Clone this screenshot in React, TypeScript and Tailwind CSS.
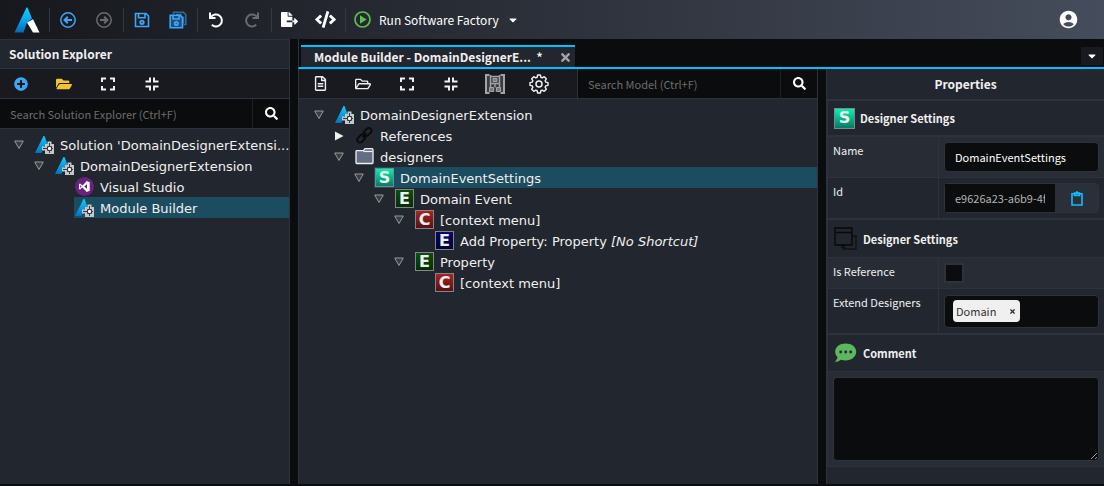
import React from "react";
import {
  FaCaretDown,
  FaCode,
  FaFileExport,
  FaFolderOpen,
  FaPlusCircle,
  FaRegFileAlt,
  FaRegFolderOpen,
  FaSearch,
  FaTimes,
} from "react-icons/fa";
import { MdAccountCircle } from "react-icons/md";

function Logo() {
  return (
    <svg width="26" height="26" viewBox="0 0 26 26" aria-hidden="true">
      <defs>
        <linearGradient id="logo-blue" x1="0" y1="0" x2="0" y2="1">
          <stop offset="0" stopColor="#12d0ff" />
          <stop offset="0.5" stopColor="#0aa5ec" />
          <stop offset="1" stopColor="#0568b4" />
        </linearGradient>
      </defs>
      <path d="M12.500 0.500h1L18 11.500l-5 4-3.500 10H0.500z" fill="url(#logo-blue)" />
      <path d="M13 15.500l6-3.300 6.500 13.300h-6.500z" fill="#fff" />
    </svg>
  );
}

function ArrowCircle({ flip }: { flip?: boolean }) {
  return (
    <svg width="16" height="16" viewBox="0 0 16 16" fill="none" stroke="currentColor" strokeWidth="1.500" aria-hidden="true">
      <circle cx="8" cy="8" r="7.200" />
      <path d={flip ? "M4 8h7M8.200 4.800L11.400 8l-3.200 3.200" : "M12 8H5M7.800 4.800L4.600 8l3.200 3.200"} strokeWidth="2" />
    </svg>
  );
}

function SaveIcon() {
  return (
    <svg width="16" height="16" viewBox="0 0 16 16" fill="none" stroke="currentColor" strokeWidth="1.600" aria-hidden="true">
      <path d="M1.500 1.500h10.500l2.500 2.500v10.500H1.500z" />
      <path d="M4.500 2v3.700h6.500V2" />
      <circle cx="8" cy="10.300" r="1.700" strokeWidth="1.900" />
    </svg>
  );
}

function SaveAllIcon() {
  return (
    <svg width="18" height="18" viewBox="0 0 18 18" fill="none" stroke="currentColor" strokeWidth="1.600" aria-hidden="true">
      <g opacity="0.550">
        <path d="M4.500 3.500V1.200h9.800l2.500 2.500v9.800H14.500" />
        <path d="M7 3.500h6M14.500 5.500v7" />
      </g>
      <path d="M1.200 4.200h9.800l2.500 2.500v10H1.200z" fill="#1d4f80" />
      <path d="M4 4.700v3.300h6V4.700" />
      <circle cx="7.300" cy="12.500" r="1.600" strokeWidth="1.900" />
    </svg>
  );
}

function TurnIcon({ flip }: { flip?: boolean }) {
  return (
    <svg width="16" height="16" viewBox="0 0 16 16" fill="none" stroke="currentColor" strokeWidth="2" aria-hidden="true">
      <g transform={flip ? "translate(16 0) scale(-1 1)" : undefined}>
        <path d="M3 4.900A6 6 0 1 1 3.800 12.800" />
        <path d="M2 0.500v5.500h5.500" />
      </g>
    </svg>
  );
}

function PlayIcon() {
  return (
    <svg width="17" height="17" viewBox="0 0 17 17" fill="none" aria-hidden="true">
      <circle cx="8.500" cy="8.500" r="7.500" stroke="#5cc04c" strokeWidth="1.700" />
      <path d="M6 4.300l6.700 4.200L6 12.700z" fill="#5cc04c" />
    </svg>
  );
}

function ExpandIcon() {
  return (
    <svg width="14" height="14" viewBox="0 0 14 14" fill="none" stroke="currentColor" strokeWidth="2" aria-hidden="true">
      <path d="M1 5V1.500h4M9 1.500h4V5M13 9v3.500H9M5 12.500H1V9" />
    </svg>
  );
}

function CollapseIcon() {
  return (
    <svg width="14" height="14" viewBox="0 0 14 14" fill="none" stroke="currentColor" strokeWidth="2" aria-hidden="true">
      <path d="M5 0.500v4H0.500M9 0.500v4h4.500M13.500 9.500H9v4M0.500 9.500H5v4" />
    </svg>
  );
}

function FrameIcon() {
  return (
    <svg width="20" height="20" viewBox="0 0 20 20" fill="none" stroke="currentColor" aria-hidden="true">
      <path d="M4.500 1H1v18h3.500M15.500 1H19v18h-3.500" strokeWidth="2" />
      <path d="M2 2h16v16H2z" fill="currentColor" fillOpacity="0.250" stroke="none" />
      <path d="M5.500 1v13M14.500 1v13M5.500 2.500h9M5.500 9.500h9M10 9.500v4" strokeWidth="1.400" />
      <path d="M8 4.500h4v3H8zM4.500 13.500h4v4h-4zM11.500 13.500h4v4h-4z" fill="currentColor" fillOpacity="0.600" />
    </svg>
  );
}

function GearIcon() {
  return (
    <svg width="20" height="20" viewBox="0 0 20 20" fill="none" stroke="currentColor" strokeLinejoin="round" aria-hidden="true">
      <path
        d="M8.500 1h3l.6 2.500 1.500.7 2.200-1.300 2.300 2.300-1.300 2.200.7 1.500 2.500.6v3l-2.500.6-.7 1.500 1.300 2.200-2.300 2.300-2.200-1.300-1.500.7-.6 2.500h-3l-.6-2.500-1.500-.7-2.200 1.300-2.300-2.300 1.300-2.200-.7-1.500L0 12.500v-3l2.500-.6.7-1.500-1.300-2.200 2.300-2.300 2.200 1.300 1.500-.7z"
        transform="translate(1 .1) scale(.9)"
        strokeWidth="1.600"
      />
      <circle cx="10" cy="10" r="3" strokeWidth="1.500" />
    </svg>
  );
}

function ModuleIcon() {
  return (
    <svg width="19" height="19" viewBox="0 0 19 19" fill="none" aria-hidden="true">
      <defs>
        <linearGradient id="module-blue" x1="0" y1="0" x2="0" y2="1">
          <stop offset="0" stopColor="#12ccff" />
          <stop offset="1" stopColor="#0571c0" />
        </linearGradient>
      </defs>
      <path d="M8.500 1h1l3 8-4 3-2 6H0z" fill="url(#module-blue)" />
      <path d="M10 9h2.500V6.500h4V9H19v10h-9v-3.500H7v-4h3z" fill="#c4c6ca" />
      <path d="M8 13.500h10M14.500 8v10" stroke="#33373f" />
      <path d="M12.500 11.500h4v4h-4z" stroke="#33373f" />
      <path d="M14.500 12v3M13 13.500h3" stroke="#fff" />
    </svg>
  );
}

function StudioIcon() {
  return (
    <svg width="19" height="19" viewBox="0 0 19 19" aria-hidden="true">
      <circle cx="9.500" cy="9.500" r="9.400" fill="#6a2180" />
      <path
        d="M4 7l1-.5 2.500 2L11.700 4l3 1.200v8.600l-3 1.200-4.200-4.500-2.500 2L4 12zM5.200 8v3l1.400-1.500zM12 7.200L9.200 9.500l2.800 2.300z"
        fill="#fff"
        fillRule="evenodd"
      />
    </svg>
  );
}

function LinkIcon() {
  return (
    <svg width="19" height="19" viewBox="0 0 19 19" fill="none" stroke="#08090b" strokeWidth="1.800" aria-hidden="true">
      <rect x="-4.500" y="-2.700" width="9" height="5.400" rx="2.700" transform="translate(12.500 6) rotate(-47)" />
      <rect x="-4.500" y="-2.700" width="9" height="5.400" rx="2.700" transform="translate(6.200 12.500) rotate(-47)" />
      <path d="M7.500 11.500l4-4.500" />
    </svg>
  );
}

function FolderIcon() {
  return (
    <svg width="19" height="19" viewBox="0 0 19 19" aria-hidden="true">
      <path
        d="M1 4.500q0-.8.8-.8h6.700l1.500-2h7q1 0 1 1v13q0 .8-.8.8H1.800q-.8 0-.8-.8z"
        fill="#636d83"
        stroke="#f0f0f0"
        strokeWidth="1.300"
      />
      <path d="M8.500 4.500h9" stroke="#f0f0f0" strokeWidth="1.200" />
    </svg>
  );
}

function WindowsIcon() {
  return (
    <svg width="23" height="24" viewBox="0 0 23 24" fill="none" stroke="#08090b" strokeWidth="1.400" aria-hidden="true">
      <path d="M1 1h17v17H1zM1 5.500h17" />
      <path d="M18 9h4v13H9v-4M7.500 21L9 18l2 3" opacity="0.700" />
    </svg>
  );
}

function CommentIcon() {
  return (
    <svg width="23" height="20" viewBox="0 0 23 20" aria-hidden="true">
      <path
        d="M11.700 0.500C5.800 0.500 1.200 4 1.200 8.700c0 2.100.9 4 2.400 5.500C3.200 16 2 17.800.8 19c2.600 0 4.800-1 6.200-2.200 1.500.4 3 .6 4.700.6 5.900 0 10.500-3.900 10.500-8.700S17.600.5 11.700.5z"
        fill="#5cb85c"
      />
      <g fill="#22262e">
        <circle cx="6.700" cy="9" r="1.400" />
        <circle cx="11.700" cy="9" r="1.400" />
        <circle cx="16.700" cy="9" r="1.400" />
      </g>
    </svg>
  );
}

function ClipboardIcon() {
  return (
    <svg width="12" height="15" viewBox="0 0 12 15" fill="none" stroke="currentColor" strokeWidth="1.600" aria-hidden="true">
      <path d="M1 2.700h10V14H1z" />
      <path d="M3.500 2h5v2.500h-5zM5 1h2" />
    </svg>
  );
}

const letterTone = {
  teal: "from-[#00f5b4] to-[#067a63]",
  green: "from-[#0b5010] to-[#032d05]",
  red: "from-[#a82424] to-[#571111]",
  blue: "from-[#05056e] to-[#020236]",
};

function LetterIcon({
  letter,
  tone,
  className = "size-[19px]",
}: {
  letter: string;
  tone: keyof typeof letterTone;
  className?: string;
}) {
  return (
    <span
      className={`flex shrink-0 items-center justify-center border border-[#858585] bg-gradient-to-b font-['DejaVu_Sans',sans-serif] text-base leading-4 font-bold text-[#f0f0f0] ${letterTone[tone]} ${className}`}
    >
      {letter}
    </span>
  );
}

function BarButton({ label, className = "", children }: { label: string; className?: string; children: React.ReactNode }) {
  return (
    <button type="button" aria-label={label} title={label} className={`flex shrink-0 items-center justify-center ${className}`}>
      {children}
    </button>
  );
}

function Group({ children }: { children: React.ReactNode }) {
  return <div className="flex h-6 w-[74px] shrink-0 items-center border-l border-[#343841]">{children}</div>;
}

function TopBar() {
  return (
    <header className="flex h-[39px] shrink-0 items-center bg-gradient-to-r from-[#16181d] to-[#454c5b]">
      <a href="#home" aria-label="Home" className="flex w-[49px] shrink-0 justify-center pl-1">
        <Logo />
      </a>
      <Group>
        <BarButton label="Back" className="w-[35px] text-[#3ea6f5]"><ArrowCircle /></BarButton>
        <BarButton label="Forward" className="w-[37px] text-[#6a6b6e]"><ArrowCircle flip /></BarButton>
      </Group>
      <Group>
        <BarButton label="Save" className="w-[35px] text-[#3ea6f5]"><SaveIcon /></BarButton>
        <BarButton label="Save all" className="w-[37px] text-[#3ea6f5]"><SaveAllIcon /></BarButton>
      </Group>
      <Group>
        <BarButton label="Undo" className="w-[35px] text-white"><TurnIcon /></BarButton>
        <BarButton label="Redo" className="w-[37px] text-[#6a6b6e]"><TurnIcon flip /></BarButton>
      </Group>
      <Group>
        <BarButton label="Export" className="w-[35px] text-white"><FaFileExport size={17} /></BarButton>
        <BarButton label="Code" className="w-[37px] text-white"><FaCode size={21} /></BarButton>
      </Group>
      <div className="flex h-6 items-center border-l border-[#343841] pl-2">
        <button type="button" className="flex items-center gap-2 text-xs leading-5 whitespace-nowrap text-white">
          <PlayIcon />
          Run Software Factory
          <FaCaretDown size={12} />
        </button>
      </div>
      <BarButton label="Account" className="mr-[25px] ml-auto text-white"><MdAccountCircle size={21} /></BarButton>
    </header>
  );
}

function SearchBox({ placeholder, className = "" }: { placeholder: string; className?: string }) {
  return (
    <form role="search" className={`flex min-w-0 bg-[#0b0c0e] ${className}`} onSubmit={(e) => e.preventDefault()}>
      <input
        type="text"
        aria-label={placeholder}
        placeholder={placeholder}
        className="min-w-0 flex-1 bg-transparent px-2.5 text-[11px] leading-6 text-white outline-none placeholder:text-[#6e6d6b]"
      />
      <BarButton label="Search" className="w-[37px] border-l border-[#1b1e24] text-white"><FaSearch size={13} /></BarButton>
    </form>
  );
}

type Node = {
  label: string;
  hint?: string;
  icon: React.ReactNode;
  state?: "open" | "closed";
  selected?: boolean;
  children?: Node[];
};

function Expander({ state }: { state?: "open" | "closed" }) {
  if (!state) return <span className="w-5 shrink-0" />;
  return (
    <button type="button" aria-label={state === "open" ? "Collapse" : "Expand"} className="flex w-5 shrink-0 items-center justify-center">
      <svg width="10" height="10" viewBox="0 0 10 10" aria-hidden="true">
        {state === "open" ? (
          <path d="M.7 1h8.600L5 8.500z" fill="#3a3d42" stroke="#999" />
        ) : (
          <path d="M1 .5L9.500 5 1 9.500z" fill="#f0f0f0" />
        )}
      </svg>
    </button>
  );
}

function TreeItems({ nodes }: { nodes: Node[] }) {
  return nodes.map((node, i) => (
    <li key={i} role="treeitem" aria-selected={!!node.selected}>
      <div className="flex h-[21px] gap-[5px]">
        <Expander state={node.state} />
        <div className={`flex min-w-0 flex-1 items-center gap-1.5 pl-px ${node.selected ? "bg-[#1c4c5f]" : ""}`}>
          <span className="shrink-0">{node.icon}</span>
          <span className="pt-[3px] text-[13px] leading-5 whitespace-nowrap text-[#f0f0f0]">
            {node.label}
            {node.hint && <em> {node.hint}</em>}
          </span>
        </div>
      </div>
      {node.children && (
        <ul role="group" className="pl-5">
          <TreeItems nodes={node.children} />
        </ul>
      )}
    </li>
  ));
}

function Tree({ label, nodes, className }: { label: string; nodes: Node[]; className: string }) {
  return (
    <ul role="tree" aria-label={label} className={`pt-[5px] font-['DejaVu_Sans',sans-serif] ${className}`}>
      <TreeItems nodes={nodes} />
    </ul>
  );
}

const solution: Node[] = [
  {
    label: "Solution 'DomainDesignerExtensi...",
    icon: <ModuleIcon />,
    state: "open",
    children: [
      {
        label: "DomainDesignerExtension",
        icon: <ModuleIcon />,
        state: "open",
        children: [
          { label: "Visual Studio", icon: <StudioIcon /> },
          { label: "Module Builder", icon: <ModuleIcon />, selected: true },
        ],
      },
    ],
  },
];

const model: Node[] = [
  {
    label: "DomainDesignerExtension",
    icon: <ModuleIcon />,
    state: "open",
    children: [
      { label: "References", icon: <LinkIcon />, state: "closed" },
      {
        label: "designers",
        icon: <FolderIcon />,
        state: "open",
        children: [
          {
            label: "DomainEventSettings",
            icon: <LetterIcon letter="S" tone="teal" />,
            state: "open",
            selected: true,
            children: [
              {
                label: "Domain Event",
                icon: <LetterIcon letter="E" tone="green" />,
                state: "open",
                children: [
                  {
                    label: "[context menu]",
                    icon: <LetterIcon letter="C" tone="red" />,
                    state: "open",
                    children: [
                      { label: "Add Property: Property", hint: "[No Shortcut]", icon: <LetterIcon letter="E" tone="blue" /> },
                    ],
                  },
                  {
                    label: "Property",
                    icon: <LetterIcon letter="E" tone="green" />,
                    state: "open",
                    children: [{ label: "[context menu]", icon: <LetterIcon letter="C" tone="red" /> }],
                  },
                ],
              },
            ],
          },
        ],
      },
    ],
  },
];

function SolutionExplorer() {
  return (
    <aside className="w-[290px] shrink-0 border-t border-r border-[#2e323c] bg-[#22262e]">
      <h2 className="h-[29px] border-b border-[#2e323c] pl-[9px] text-xs leading-7 font-bold">Solution Explorer</h2>
      <div className="flex h-[30px] items-center border-b border-[#2e323c] bg-[#181a1f] text-[#f0f0f0]">
        <BarButton label="Add" className="w-[42px] text-[#3ea6f5]"><FaPlusCircle size={14} /></BarButton>
        <BarButton label="Open" className="w-11 text-[#f0c330]"><FaFolderOpen size={16} /></BarButton>
        <BarButton label="Expand all" className="w-11"><ExpandIcon /></BarButton>
        <BarButton label="Collapse all" className="w-11"><CollapseIcon /></BarButton>
      </div>
      <SearchBox placeholder="Search Solution Explorer (Ctrl+F)" className="h-[30px] border-b border-[#2e323c]" />
      <Tree label="Solution" nodes={solution} className="pl-[9px]" />
    </aside>
  );
}

function ModelPanel() {
  return (
    <section aria-label="Model" className="min-w-0 flex-1 border-x border-[#2e323c] bg-[#22262e]">
      <div className="flex h-[30px] items-center border-b border-[#2e323c] bg-[#181a1f] text-[#f0f0f0]">
        <BarButton label="New" className="w-[42px]"><FaRegFileAlt size={15} /></BarButton>
        <BarButton label="Open" className="w-11"><FaRegFolderOpen size={16} /></BarButton>
        <BarButton label="Expand all" className="w-11"><ExpandIcon /></BarButton>
        <BarButton label="Collapse all" className="w-11"><CollapseIcon /></BarButton>
        <BarButton label="Diagram" className="w-11 text-[#a2a3a5]"><FrameIcon /></BarButton>
        <BarButton label="Settings" className="w-11"><GearIcon /></BarButton>
        <SearchBox placeholder="Search Model (Ctrl+F)" className="ml-auto h-[29px] w-[240px] border-l border-[#2e323c]" />
      </div>
      <Tree label="Model tree" nodes={model} className="pl-2.5" />
    </section>
  );
}

function PropertyHeading({ icon, children, className = "" }: { icon: React.ReactNode; children: React.ReactNode; className?: string }) {
  return (
    <h3 className={`flex items-center border-[#2e323c] pl-1.5 text-[11px] leading-5 font-bold ${className}`}>
      {icon}
      {children}
    </h3>
  );
}

function PropertyRow({ id, label, className = "", children }: { id: string; label: string; className?: string; children: React.ReactNode }) {
  return (
    <div className={`flex border-[#2e323c] ${className}`}>
      <label htmlFor={id} className="w-[110px] shrink-0 pt-[3px] pl-[5px] text-[11px] leading-5">{label}</label>
      <div className="flex min-w-0 flex-1 items-center border-l border-[#2e323c] px-[5px]">{children}</div>
    </div>
  );
}

function Properties() {
  return (
    <aside className="w-[278px] shrink-0 border-l border-[#2e323c] bg-[#22262e] text-[#f0f0f0]">
      <h2 className="h-8 border-b-2 border-[#2e323c] text-center text-xs leading-[30px] font-bold">Properties</h2>
      <div className="border-l border-[#2e323c]">
        <PropertyHeading className="h-9 gap-[5px] border-b-2" icon={<LetterIcon letter="S" tone="teal" className="size-[21px]" />}>
          Designer Settings
        </PropertyHeading>
        <PropertyRow id="name" label="Name" className="h-[41px] border-b bg-[#282c35]">
          <input
            id="name"
            type="text"
            defaultValue="DomainEventSettings"
            className="h-[30px] w-full min-w-0 rounded-sm border border-[#2e323c] bg-[#0b0c0e] px-2.5 text-[11px] leading-6 text-white outline-none"
          />
        </PropertyRow>
        <PropertyRow id="identifier" label="Id" className="h-[42px] border-b-2">
          <div className="flex h-[30px] w-full rounded-sm border border-[#2e323c]">
            <input
              id="identifier"
              type="text"
              readOnly
              defaultValue="e9626a23-a6b9-4fd1-9d0c-7b2c6c1f4c55"
              className="min-w-0 flex-1 bg-[#0b0c0e] px-2.5 text-[11px] leading-6 text-[#b4b4b4] outline-none"
            />
            <BarButton label="Copy id" className="w-[43px] bg-[#2b2f39] text-[#12bdf8]"><ClipboardIcon /></BarButton>
          </div>
        </PropertyRow>
        <PropertyHeading className="h-[38px] gap-1.5 border-b" icon={<WindowsIcon />}>Designer Settings</PropertyHeading>
        <PropertyRow id="is-reference" label="Is Reference" className="h-[31px] border-b bg-[#282c35]">
          <input id="is-reference" type="checkbox" className="size-5 appearance-none border-2 border-[#2e323c] bg-[#0b0c0e]" />
        </PropertyRow>
        <PropertyRow id="extend-designers" label="Extend Designers" className="h-[46px] border-b-2">
          <div className="flex h-[33px] w-full items-center rounded-sm border border-[#2e323c] bg-[#0b0c0e] pl-2">
            <span className="flex h-[22px] items-center gap-2 rounded-sm bg-[#f0f0f0] pl-[3px] text-[11px] leading-5 text-[#303030]">
              Domain
              <BarButton label="Remove Domain" className="w-4 text-[#303030]"><FaTimes size={7} /></BarButton>
            </span>
            <input id="extend-designers" type="text" className="min-w-0 flex-1 bg-transparent px-1 text-[11px] leading-6 outline-none" />
          </div>
        </PropertyRow>
        <PropertyHeading className="h-[37px] gap-1.5 border-b" icon={<CommentIcon />}>
          <label htmlFor="comment">Comment</label>
        </PropertyHeading>
        <div className="flex border-b border-[#2e323c] bg-[#282c35] p-[5px]">
          <textarea
            id="comment"
            className="h-[84px] w-full rounded-sm border border-[#2e323c] bg-[#0b0c0e] text-[11px] text-white outline-none"
          />
        </div>
      </div>
    </aside>
  );
}

export default function App() {
  return (
    <div className="flex h-screen flex-col bg-[#0b0c0e] pb-0.5 font-['Noto_Sans_CJK_SC',sans-serif] text-[#f0f0f0] [color-scheme:dark]">
      <TopBar />
      <main className="flex min-h-0 flex-1 gap-2">
        <SolutionExplorer />
        <div className="flex min-w-0 flex-1 flex-col">
          <div className="flex h-[30px] shrink-0 items-end justify-between border-b-2 border-l border-b-[#00c0ff] border-l-[#2e323c] pl-0.5">
            <div className="flex h-[22px] w-[274px] items-center justify-between border-t-2 border-[#00c0ff] bg-[#22262e] pr-[3px] pl-[13px]">
              <a href="#module-builder" className="text-xs leading-5 font-bold whitespace-nowrap">
                Module Builder - DomainDesignerE...&nbsp; *
              </a>
              <BarButton label="Close tab" className="text-[#a2a3a5]"><FaTimes size={13} /></BarButton>
            </div>
            <BarButton label="Open tabs" className="mr-px mb-0.5 h-[18px] w-[22px] bg-[#181a1f] text-white"><FaCaretDown size={12} /></BarButton>
          </div>
          <div className="flex min-h-0 flex-1 gap-2">
            <ModelPanel />
            <Properties />
          </div>
        </div>
      </main>
    </div>
  );
}
